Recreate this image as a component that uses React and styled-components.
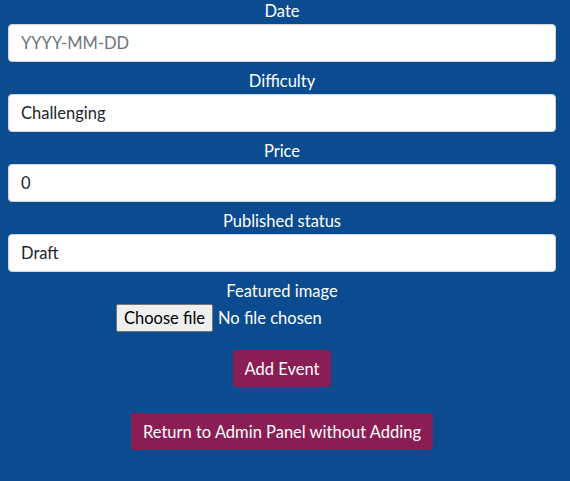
import React from 'react'
import styled, { createGlobalStyle } from 'styled-components'

const GlobalStyle = createGlobalStyle`
  html, body {
    margin: 0;
    background: #0b4b8f;
  }
  body {
    font-family: Lato, "Open Sans", sans-serif;
    color: #fff;
  }
`

const Form = styled.form`
  display: flex;
  flex-direction: column;
  padding: 0 14px 20px 8px;
`

const Field = styled.div`
  display: flex;
  flex-direction: column;
  margin-bottom: 8px;
`

const Label = styled.label`
  text-align: center;
  font-size: 16.5px;
  line-height: 23px;
  padding-bottom: 1px;
`

const Input = styled.input`
  box-sizing: border-box;
  height: 38px;
  width: 100%;
  padding: 0 12px;
  border: 1px solid #ced4da;
  border-radius: 4px;
  background: #fff;
  font-family: inherit;
  font-size: 16.5px;
  color: #212529;
  &::placeholder {
    color: #6c757d;
  }
`

const FilePicker = styled.div`
  align-self: center;
  width: 332px;
  display: flex;
  align-items: center;
  gap: 5px;
  height: 28px;
  font-size: 16.5px;
`

const HiddenFile = styled.input`
  display: none;
`

const PickButton = styled.label`
  box-sizing: border-box;
  height: 28px;
  width: 97px;
  display: flex;
  align-items: center;
  justify-content: center;
  background: #efefef;
  border: 1px solid #767676;
  border-radius: 2px;
  color: #000;
  cursor: default;
`

const Button = styled.button`
  align-self: center;
  margin-top: ${p => p.$top}px;
  padding: 0 12px;
  height: 37px;
  border: none;
  border-radius: 3px;
  background: #8a1d53;
  color: #fff;
  font-family: inherit;
  font-size: 16.5px;
`

const App = () => {
  return (
    <>
      <GlobalStyle />
      <Form onSubmit={e => e.preventDefault()}>
        <Field>
          <Label>Date</Label>
          <Input placeholder="YYYY-MM-DD" />
        </Field>
        <Field>
          <Label>Difficulty</Label>
          <Input defaultValue="Challenging" />
        </Field>
        <Field>
          <Label>Price</Label>
          <Input defaultValue="0" />
        </Field>
        <Field>
          <Label>Published status</Label>
          <Input defaultValue="Draft" />
        </Field>
        <Field>
          <Label>Featured image</Label>
          <FilePicker>
            <HiddenFile type="file" id="featured" />
            <PickButton htmlFor="featured">Choose file</PickButton>
            <span>No file chosen</span>
          </FilePicker>
        </Field>
        <Button $top={10} type="submit">Add Event</Button>
        <Button $top={26} type="button">Return to Admin Panel without Adding</Button>
      </Form>
    </>
  )
}

export default App
